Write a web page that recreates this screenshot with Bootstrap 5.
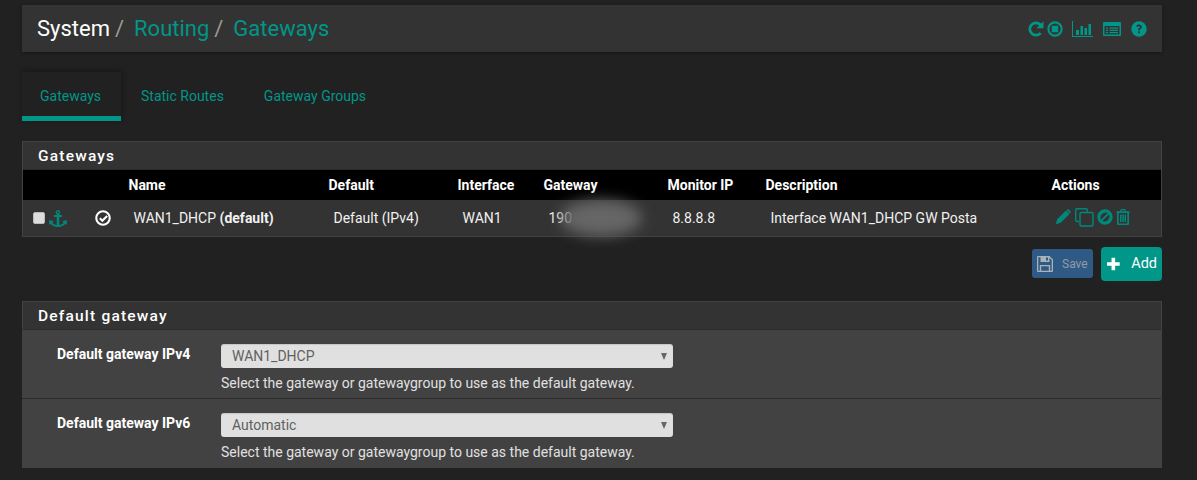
<!doctype html>
<html lang="en">
<head>
<meta charset="utf-8">
<title>System / Routing / Gateways</title>
<link rel="stylesheet" href="https://cdn.jsdelivr.net/npm/bootstrap@5.3.0/dist/css/bootstrap.min.css">
<style>
html,body{height:480px;overflow:hidden}
body{background:#212121;color:#fff;font-family:Roboto,"Liberation Sans",sans-serif;font-size:14px;line-height:20px}
a{text-decoration:none;color:#009688}
svg{display:block;fill:#00897b}
.page-wrap{padding:5px 35px 0 22px}
.crumb-bar{height:47px;background:#333;box-shadow:0 1px 3px rgba(0,0,0,.35);padding:0 15px;font-size:22px;color:#a09a92}
.crumb-bar a{color:#009688}
.crumb-bar svg{fill:#009688}
.crumb-first{color:#fff}
.crumb-sep{margin:0 4.5px 0 5px}
.crumb-icons{gap:10px}
.icon-tight{margin-left:-7px}
.icon-chart{margin-left:-1px}
.tab-row{margin-top:20px;height:49px}
.tab-link{display:block;height:49px;padding:14px 20px 0;color:#009688;font-size:14px}
.tab-on{border-bottom:5px solid #009688;box-shadow:0 -2px 5px rgba(0,0,0,.18),2px 0 5px rgba(0,0,0,.15);width:99px;padding-left:18px}
.gw-panel{background:#333;border:1px solid #424242;margin-top:20px}
.gw-title{height:28px;padding:4px 15px 0;font-weight:500;letter-spacing:1.2px;font-size:15.5px;background:#333;border-bottom:1px solid #2b2b2b}
.gw-table{width:100%;table-layout:fixed;margin:0;border-collapse:collapse;color:#fff}
.gw-table th{background:#000;height:30px;padding:0;font-weight:700;font-size:14px;vertical-align:middle}
.gw-table td{height:36px;padding:0 0 0 5px;background:#333;vertical-align:middle;color:#f1f1f1;white-space:nowrap}
.gw-table td.cell-tick{padding:0}
.gw-table td.cell-actions{padding:0 0 0 3px}
.action-icons{margin-top:-2px}
.blur-mask{position:absolute;left:11px;top:-8px;width:82px;height:36px;border-radius:50%;background:#666;filter:blur(7px)}
.fake-check{width:12px;height:12px;background:#ddd;border:1px solid #bbb;border-radius:2px;margin:0 4px 0 10px}
.icon-ok{margin-left:28px;fill:#fff}
.icon-copy{margin-left:4px;fill:none;stroke:#00897b;stroke-width:1.4}
.icon-ban{margin-left:3px}
.icon-trash{margin-left:3px}
.act-row{height:34px;margin-top:10px;gap:8px}
.btn-save{width:61px;height:29px;background:#2f5a85;border-radius:3px;color:#8f9ca8;font-size:12px;margin-top:2px;padding:0 0 0 5px;gap:9px}
.btn-save svg{fill:#a9b2b9}
.btn-add{width:61px;height:34px;background:#009688;border-radius:4px;color:#fff;font-size:14.5px;padding:0 5px 0 6px;gap:11.5px}
.btn-add svg{fill:#fff}
.form-panel{background:#424242;margin-top:20px;border:1px solid #424242;border-width:1px 1px 0 0}
.form-title{height:28px;padding:4px 15px 0;background:#333;font-weight:500;letter-spacing:1.2px;font-size:15.5px;border-bottom:1px solid #2b2b2b;border-left:1px solid #424242}
.form-line{display:flex;height:68px;padding-top:14px}
.form-line+.form-line{border-top:1px solid #2b2b2b;height:70px}
.form-label{width:199px;flex:none;padding:1px 0 0 35px;font-weight:700;font-size:14px;line-height:19px}
.fake-select{width:452px;height:24px;background:#e0e0e0;border-radius:3px;color:#616161;padding:0 11px;font-size:14px;line-height:24px;box-shadow:inset 0 1px 1px rgba(0,0,0,.12)}
.sel-arrow{width:0;height:0;border-left:3.5px solid transparent;border-right:3.5px solid transparent;border-top:7px solid #666;margin-right:-5px}
.help-line{margin-top:5px;color:#e0e0e0;font-size:14px;line-height:20px}
</style>
</head>
<body>
<div class="page-wrap">
  <div class="crumb-bar d-flex align-items-center justify-content-between">
    <div><span class="crumb-first">System</span><span class="crumb-sep">/</span> <a href="#">Routing</a><span class="crumb-sep">/</span> <a href="#">Gateways</a></div>
    <div class="crumb-icons d-flex align-items-center">
      <svg width="16" height="16" viewBox="0 0 16 16"><path d="M15.500.3v6.900H8.600l2.600-2.600A4.700 4.700 0 0 0 8 3.200a4.800 4.800 0 1 0 3.600 8l2 1.800A7.500 7.500 0 1 1 8 .500c2.100 0 3.900.8 5.200 2.100z"/></svg>
      <svg class="icon-tight" width="16" height="16" viewBox="0 0 16 16"><path fill-rule="evenodd" d="M8 .3a7.700 7.700 0 1 1 0 15.400A7.700 7.700 0 0 1 8 .3zm0 2.100a5.600 5.600 0 1 0 0 11.200A5.600 5.600 0 0 0 8 2.400zM4.800 4.800h6.400v6.400H4.800z"/></svg>
      <svg class="icon-chart" width="21" height="16" viewBox="0 0 21 16"><path d="M0 0h1v15h20v1H0zM4 9h3v5H4zM8.500 5h2.500v9H8.500zM12.500 7H15v7h-2.500zM16.500 3H19v11h-2.500z"/></svg>
      <svg width="18" height="14" viewBox="0 0 18 14"><path fill-rule="evenodd" d="M1 0h16a1 1 0 0 1 1 1v12a1 1 0 0 1-1 1H1a1 1 0 0 1-1-1V1a1 1 0 0 1 1-1zm.5 4v8.500h15V4zM3 5.500h2v1.300H3zm3.500 0H15v1.300H6.500zM3 7.800h2v1.300H3zm3.500 0H15v1.300H6.500zM3 10h2v1.300H3zm3.500 0H15v1.300H6.500z"/></svg>
      <svg width="16" height="16" viewBox="0 0 16 16"><circle cx="8" cy="8" r="7.700"/><path fill="#333" d="M7 10.200h2v2H7zM7 9.300v-.5c0-1 .6-1.400 1.200-1.800.5-.3.7-.5.7-.9 0-.5-.4-.8-1-.8-.6 0-1 .3-1.400.8L5.300 5c.6-.9 1.500-1.400 2.700-1.400 1.600 0 2.900.9 2.900 2.300 0 1.100-.7 1.600-1.400 2.100-.4.300-.6.500-.6 1v.3z"/></svg>
    </div>
  </div>

  <div class="tab-row d-flex">
    <a class="tab-link tab-on" href="#">Gateways</a>
    <a class="tab-link" href="#">Static Routes</a>
    <a class="tab-link" href="#">Gateway Groups</a>
  </div>

  <div class="gw-panel">
    <div class="gw-title">Gateways</div>
    <table class="gw-table">
      <colgroup><col style="width:105.500px"><col style="width:200px"><col style="width:129px"><col style="width:86px"><col style="width:124px"><col style="width:98px"><col style="width:286px"><col></colgroup>
      <thead><tr><th></th><th>Name</th><th>Default</th><th>Interface</th><th>Gateway</th><th>Monitor IP</th><th>Description</th><th>Actions</th></tr></thead>
      <tbody><tr>
        <td class="cell-tick">
          <div class="d-flex align-items-center">
            <span class="fake-check"></span>
            <svg width="18" height="17" viewBox="0 0 18 17"><path fill-rule="evenodd" d="M9 0a2.200 2.200 0 0 1 1.300 4V5H13v1.900h-2.700v8c1.900-.2 3.500-1 4.400-2.200l-1.400-1.400L17.800 10v5l-1.300-1.200C15.200 15.600 12.300 17 9 17s-6.200-1.400-7.500-3.200L.2 15v-5l4.500 1.300-1.400 1.400c.9 1.200 2.500 2 4.400 2.200v-8H5V5h2.700V4A2.200 2.200 0 0 1 9 0zm0 1.300a.9.900 0 1 0 0 1.800.9.900 0 0 0 0-1.800z"/></svg>
            <svg class="icon-ok" width="16" height="16" viewBox="0 0 16 16"><path fill-rule="evenodd" d="M8 .2a7.800 7.800 0 1 1 0 15.600A7.800 7.800 0 0 1 8 .2zm0 2.100a5.700 5.700 0 1 0 0 11.400A5.700 5.700 0 0 0 8 2.300zm3.400 2.900 1.500 1.500-5.600 5.500-3.200-3.200 1.500-1.500 1.700 1.700z"/></svg>
          </div>
        </td>
        <td>WAN1_DHCP <b>(default)</b></td>
        <td>Default (IPv4)</td>
        <td>WAN1</td>
        <td><div class="position-relative">190<div class="blur-mask"></div></div></td>
        <td>8.8.8.8</td>
        <td>Interface WAN1_DHCP GW Posta</td>
        <td class="cell-actions">
          <div class="action-icons d-flex align-items-center">
            <svg width="16" height="16" viewBox="0 0 16 16"><path d="M11 1.500l3.500 3.500-8.800 8.800L.8 15.200l1.400-4.900zM12.200.5c.5-.4 1.100-.4 1.500 0l1.800 1.800c.4.400.4 1 0 1.500l-.6.600L11.500 1z"/></svg>
            <svg class="icon-copy" width="19" height="19" viewBox="0 0 19 19"><path d="M4 13.500H2A1.300 1.300 0 0 1 .7 12.200V2A1.300 1.300 0 0 1 2 .7h9A1.300 1.300 0 0 1 12.300 2v2"/><rect x="5" y="4.500" width="13" height="13.500" rx="1.300"/></svg>
            <svg class="icon-ban" width="16" height="16" viewBox="0 0 16 16"><path fill-rule="evenodd" d="M8 .3a7.700 7.700 0 1 1 0 15.400A7.700 7.700 0 0 1 8 .3zM3.900 10.800l6.900-6.900A5.300 5.300 0 0 0 3.900 10.800zm1.300 1.300A5.300 5.300 0 0 0 12.100 5.200z"/></svg>
            <svg class="icon-trash" width="14" height="16" viewBox="0 0 14 16"><path fill-rule="evenodd" d="M5 0h4l1.100 2.200h3.400V4H13v11a1 1 0 0 1-1 1H2a1 1 0 0 1-1-1V4H.5V2.200h3.400zm.6 1.200-.4 1h3.600l-.4-1zM2.700 4v10.400h8.600V4zM4 5.500h1.500V13H4zm2.300 0h1.500V13H6.300zm2.300 0H10V13H8.600z"/></svg>
          </div>
        </td>
      </tr></tbody>
    </table>
  </div>

  <div class="act-row d-flex justify-content-end">
    <a class="btn-save d-flex align-items-center" href="#">
      <svg width="16" height="16" viewBox="0 0 16 16"><path fill-rule="evenodd" d="M1 0h11.500L16 3.500V15a1 1 0 0 1-1 1H1a1 1 0 0 1-1-1V1a1 1 0 0 1 1-1zm.3 1.300v13.400h1.500V9h10.400v5.700h1.500V4l-2.200-2.200V6H3.500V1.300zm2.900 9v4.400h7.600v-4.400zM9 1.500v3h2v-3z"/></svg>
      <span>Save</span>
    </a>
    <a class="btn-add d-flex align-items-center" href="#">
      <svg width="14" height="14" viewBox="0 0 14 14"><path d="M5 0h4v5h5v4H9v5H5V9H0V5h5z"/></svg>
      <span>Add</span>
    </a>
  </div>

  <div class="form-panel">
    <div class="form-title">Default gateway</div>
    <div class="form-line">
      <div class="form-label">Default gateway IPv4</div>
      <div>
        <div class="fake-select d-flex justify-content-between align-items-center"><span>WAN1_DHCP</span><span class="sel-arrow"></span></div>
        <div class="help-line">Select the gateway or gatewaygroup to use as the default gateway.</div>
      </div>
    </div>
    <div class="form-line">
      <div class="form-label">Default gateway IPv6</div>
      <div>
        <div class="fake-select d-flex justify-content-between align-items-center"><span>Automatic</span><span class="sel-arrow"></span></div>
        <div class="help-line">Select the gateway or gatewaygroup to use as the default gateway.</div>
      </div>
    </div>
  </div>
</div>
<script src="https://cdn.jsdelivr.net/npm/bootstrap@5.3.0/dist/js/bootstrap.bundle.min.js"></script>
</body>
</html>
